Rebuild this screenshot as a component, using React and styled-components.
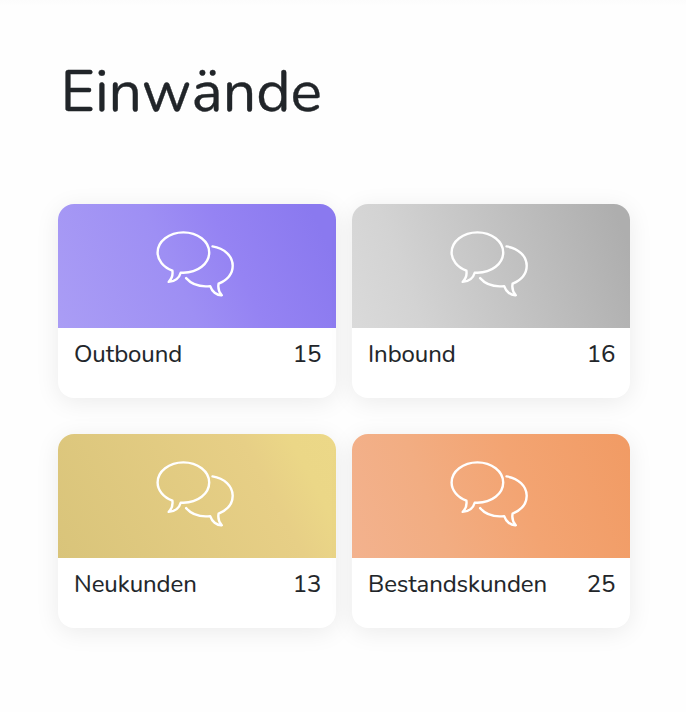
import React from "react";
import styled, { createGlobalStyle } from "styled-components";

const GlobalStyle = createGlobalStyle`
  * { box-sizing: border-box; }
  body {
    margin: 0;
    background: #fefefe;
    color: #212529;
    font-family: Nunito, "Noto Sans", sans-serif;
  }
`;

const Page = styled.main`
  min-height: 712px;
  padding: 52px 56px 0 58px;
  background: linear-gradient(to bottom, #fcfcfc 0, #fefefe 6px);
`;

const Title = styled.h1`
  margin: 0 0 72px 2.5px;
  font-size: 59px;
  font-weight: 400;
  line-height: 80px;
  -webkit-text-stroke: 0.35px currentColor;
`;

const Grid = styled.div`
  display: grid;
  grid-template-columns: 278px 278px;
  gap: 36px 16px;
`;

const Card = styled.article`
  height: 194px;
  border-radius: 16px;
  overflow: hidden;
  background: #fff;
  box-shadow: 0 4px 24px rgba(0, 0, 0, 0.08);
`;

const Banner = styled.div`
  display: flex;
  justify-content: center;
  height: 124px;
  padding: 26px 2px 0 0;
  background: linear-gradient(${(p) => p.$angle}deg, ${(p) => p.$colors});
`;

const Caption = styled.div`
  display: flex;
  justify-content: space-between;
  padding: 10px 14.5px 0 16px;
  font-size: 24px;
  line-height: 32px;
  -webkit-text-stroke: 0.12px currentColor;
`;

const Label = styled.span`
  letter-spacing: -0.08px;
`;

const Count = styled.span`
  letter-spacing: 0;
`;

const BubbleIcon = styled.svg`
  width: 80px;
  height: 68px;
  fill: none;
  stroke: #fff;
  stroke-width: 2.4;
  stroke-linecap: round;
  stroke-linejoin: round;
`;

const Bubbles = () => (
  <BubbleIcon viewBox="0 0 80 68" aria-hidden="true">
    <path d="M16.4 40.7C7.4 37.2 1.6 30.3 1.6 22.5C1.6 11.3 13.1 2.4 27.4 2.4S53.2 11.3 53.2 22.5S41.7 42.7 27.4 42.7H24.7C23.4 47.6 19.1 51.9 12.7 51.9C15.8 48.8 17 44.8 16.4 40.7Z" />
    <path d="M56.5 16.4C68.2 18.2 76.7 26 76.7 35.7C76.7 43.6 71.2 50 62.6 53.7C61.8 58 63 62.2 65.8 65.2C60.4 65.6 56 61.4 54.2 56.1C44.2 57.2 35.2 53.9 30.1 48.1" />
  </BubbleIcon>
);

const cards = [
  { name: "Outbound", count: 15, angle: 65, colors: "#aa9df5, #9e8ff4 42%, #9583f3 62%, #8a79ef 92%" },
  { name: "Inbound", count: 16, angle: 70, colors: "#dadada, #d3d3d3 22%, #aeaeae 95%" },
  { name: "Neukunden", count: 13, angle: 62, colors: "#d9c47a, #e7cf86 72%, #ebd787 86%, #ecd888" },
  { name: "Bestandskunden", count: 25, angle: 70, colors: "#f3b28e, #f2ad82 30%, #f3a472 60%, #f19b64" },
];

export default function App() {
  return (
    <>
      <GlobalStyle />
      <Page>
        <Title>Einwände</Title>
        <Grid>
          {cards.map((c) => (
            <Card key={c.name}>
              <Banner $angle={c.angle} $colors={c.colors}>
                <Bubbles />
              </Banner>
              <Caption>
                <Label>{c.name}</Label>
                <Count>{c.count}</Count>
              </Caption>
            </Card>
          ))}
        </Grid>
      </Page>
    </>
  );
}
